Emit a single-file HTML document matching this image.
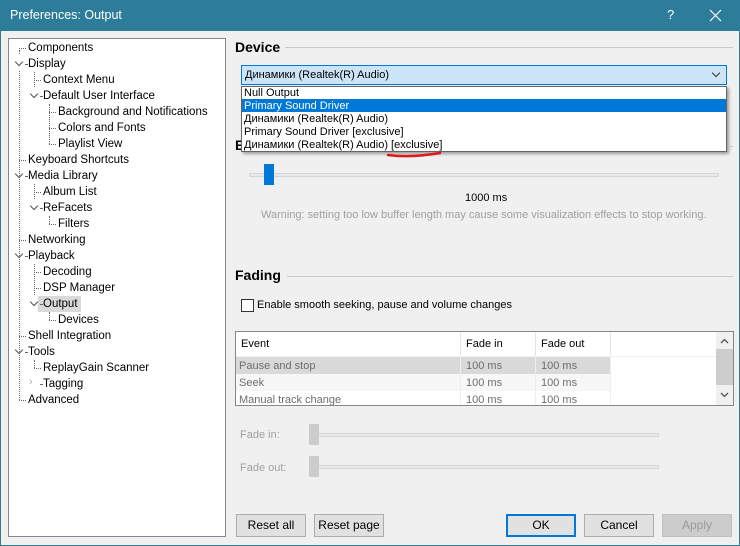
<!DOCTYPE html>
<html><head><meta charset="utf-8"><style>
*{box-sizing:border-box;margin:0;padding:0}
body{width:740px;height:546px;background:#f0f0f0;font-family:"Liberation Sans",sans-serif;font-size:11.5px;color:#000;position:relative;overflow:hidden}
.a{position:absolute;white-space:nowrap}
.t{position:absolute;white-space:nowrap;color:#000;line-height:16px;height:16px}
.hd{position:absolute;height:0;border-top:1px dotted #666}
.vd{position:absolute;width:0;border-left:1px dotted #666}
.ch{position:absolute;width:6px;height:6px;border-left:1.3px solid #555;border-bottom:1.3px solid #555;transform:rotate(-45deg)}
.btn{position:absolute;top:514px;height:23px;width:70px;border:1px solid #adadad;background:#e1e1e1;text-align:center;line-height:21px;font-size:12px}
.row{position:absolute;height:13px;line-height:14px;left:242px;width:484px;padding-left:2px;font-size:11px}
</style></head><body>
<div class="a" style="left:0;top:0;width:740px;height:31px;background:#2d7c99"></div>
<div class="a" style="left:10px;top:8px;color:#fff;font-size:12.5px">Preferences: Output</div>
<div class="a" style="left:667px;top:7px;color:#fff;font-size:13px">?</div>
<svg class="a" style="left:709px;top:9px" width="13" height="13"><path d="M1 1L12 12M12 1L1 12" stroke="#fff" stroke-width="1.2"/></svg>
<div class="a" style="left:0;top:31px;width:1px;height:515px;background:#2d7c99"></div>
<div class="a" style="right:0;top:31px;width:1px;height:515px;background:#2d7c99"></div>
<div class="a" style="left:0;bottom:0;width:740px;height:1px;background:#2d7c99"></div>

<!-- tree -->
<div class="a" style="left:8px;top:38px;width:218px;height:499px;background:#fff;border:1px solid #828790"></div>
<div class="vd" style="left:19px;top:50px;height:4px"></div>
<div class="vd" style="left:19px;top:71px;height:329px"></div>
<div class="vd" style="left:34px;top:72px;height:15px"></div>
<div class="vd" style="left:49px;top:104px;height:40px"></div>
<div class="vd" style="left:34px;top:184px;height:15px"></div>
<div class="vd" style="left:49px;top:216px;height:8px"></div>
<div class="vd" style="left:34px;top:264px;height:31px"></div>
<div class="vd" style="left:49px;top:312px;height:8px"></div>
<div class="vd" style="left:34px;top:360px;height:8px"></div>
<div class="a" style="left:38px;top:296px;width:43px;height:16px;background:#d9d9d9"></div>
<div id="tree"></div>
<script>
var it=[[0,"Components"],[0,"Display",1],[1,"Context Menu"],[1,"Default User Interface",1],[2,"Background and Notifications"],[2,"Colors and Fonts"],[2,"Playlist View"],[0,"Keyboard Shortcuts"],[0,"Media Library",1],[1,"Album List"],[1,"ReFacets",1],[2,"Filters"],[0,"Networking"],[0,"Playback",1],[1,"Decoding"],[1,"DSP Manager"],[1,"Output",1],[2,"Devices"],[0,"Shell Integration"],[0,"Tools",1],[1,"ReplayGain Scanner"],[1,"Tagging",2],[0,"Advanced"]];
var h="";
it.forEach(function(e,i){var y=40+i*16,x=28+e[0]*15;
if(e[2]==1){h+='<div class="ch" style="left:'+(x-12)+'px;top:'+(y+3)+'px"></div>';h+='<div class="hd" style="left:'+(x-3)+'px;top:'+(y+8)+'px;width:2px"></div>';}
else if(e[2]==2){h+='<div class="a" style="left:'+(x-14)+'px;top:'+(y)+'px;color:#aaa;font-size:11px">›</div>';h+='<div class="hd" style="left:'+(x-3)+'px;top:'+(y+8)+'px;width:2px"></div>';}
else h+='<div class="hd" style="left:'+(x-9)+'px;top:'+(y+8)+'px;width:7px"></div>';
h+='<div class="t" style="left:'+x+'px;top:'+y+'px">'+e[1]+'</div>';});
document.getElementById("tree").innerHTML=h;
</script>

<!-- Device -->
<div class="a" style="left:235px;top:39px;font-size:14px;font-weight:bold">Device</div>
<div class="a" style="left:285px;top:47px;width:448px;height:1px;background:#c8c8c8"></div>
<div class="a" style="left:241px;top:65px;width:486px;height:20px;background:#cce4f7;border:1px solid #0078d7"></div>
<div class="a" style="left:245px;top:69px;font-size:11px">Динамики (Realtek(R) Audio)</div>
<div class="ch" style="left:713px;top:70px;border-color:#333;width:6px;height:6px"></div>
<div class="a" style="left:235px;top:137px;font-size:14px;font-weight:bold">B</div>
<div class="a" style="left:730px;top:146px;width:3px;height:1px;background:#c8c8c8"></div>
<div class="a" style="left:241px;top:86px;width:486px;height:66px;background:#fff;border:1px solid #646464;box-shadow:2px 2px 3px rgba(0,0,0,.35)"></div>
<div class="row" style="top:86px">Null Output</div>
<div class="row" style="top:99px;background:#0078d7;color:#fff">Primary Sound Driver</div>
<div class="row" style="top:112px">Динамики (Realtek(R) Audio)</div>
<div class="row" style="top:125px">Primary Sound Driver [exclusive]</div>
<div class="row" style="top:138px">Динамики (Realtek(R) Audio) [exclusive]</div>
<svg class="a" style="left:380px;top:148px" width="70" height="14"><path d="M8 7 Q30 10 60 5" stroke="#e01818" stroke-width="2.5" fill="none" stroke-linecap="round"/></svg>

<div class="a" style="left:249px;top:173px;width:470px;height:4px;background:#e7eaea;border:1px solid #d6d6d6"></div>
<div class="a" style="left:264px;top:164px;width:10px;height:21px;background:#0078d7"></div>
<div class="a" style="left:465px;top:192px;font-size:11px">1000 ms</div>
<div class="a" style="left:261px;top:209px;font-size:11px;color:#a0a0a0">Warning: setting too low buffer length may cause some visualization effects to stop working.</div>

<!-- Fading -->
<div class="a" style="left:235px;top:267px;font-size:14px;font-weight:bold">Fading</div>
<div class="a" style="left:287px;top:276px;width:446px;height:1px;background:#c8c8c8"></div>
<div class="a" style="left:241px;top:299px;width:13px;height:13px;border:1px solid #333;background:#fff"></div>
<div class="a" style="left:257px;top:299px;font-size:11px">Enable smooth seeking, pause and volume changes</div>

<div class="a" style="left:235px;top:331px;width:499px;height:75px;background:#fff;border:1px solid #828790"></div>
<div class="a" style="left:460px;top:332px;width:1px;height:24px;background:#e5e5e5"></div>
<div class="a" style="left:535px;top:332px;width:1px;height:24px;background:#e5e5e5"></div>
<div class="a" style="left:610px;top:332px;width:1px;height:24px;background:#e5e5e5"></div>
<div class="a" style="left:236px;top:356px;width:480px;height:1px;background:#f0f0f0"></div>
<div class="a" style="left:241px;top:338px;font-size:11px">Event</div>
<div class="a" style="left:466px;top:338px;font-size:11px">Fade in</div>
<div class="a" style="left:541px;top:338px;font-size:11px">Fade out</div>
<div class="a" style="left:236px;top:357px;width:374px;height:17px;background:#d9d9d9"></div>
<div class="a" style="left:236px;top:374px;width:374px;height:17px;background:#f7f7f7"></div>
<div class="a" style="left:460px;top:357px;width:1px;height:48px;background:#eee"></div>
<div class="a" style="left:535px;top:357px;width:1px;height:48px;background:#eee"></div>
<div class="a" style="left:610px;top:357px;width:1px;height:48px;background:#eee"></div>
<div class="a" style="left:239px;top:360px;color:#6d6d6d;font-size:11px">Pause and stop</div>
<div class="a" style="left:466px;top:360px;color:#6d6d6d;font-size:11px">100 ms</div>
<div class="a" style="left:541px;top:360px;color:#6d6d6d;font-size:11px">100 ms</div>
<div class="a" style="left:239px;top:377px;color:#6d6d6d;font-size:11px">Seek</div>
<div class="a" style="left:466px;top:377px;color:#6d6d6d;font-size:11px">100 ms</div>
<div class="a" style="left:541px;top:377px;color:#6d6d6d;font-size:11px">100 ms</div>
<div class="a" style="left:236px;top:391px;width:374px;height:14px;overflow:hidden"><div class="a" style="left:3px;top:3px;color:#6d6d6d;font-size:11px">Manual track change</div><div class="a" style="left:230px;top:3px;color:#6d6d6d;font-size:11px">100 ms</div><div class="a" style="left:305px;top:3px;color:#6d6d6d;font-size:11px">100 ms</div></div>
<div class="a" style="left:716px;top:332px;width:17px;height:73px;background:#f0f0f0"></div>
<div class="a" style="left:716px;top:349px;width:17px;height:36px;background:#cdcdcd"></div>
<svg class="a" style="left:720px;top:338px" width="9" height="6"><path d="M1 5L4.5 1.5L8 5" stroke="#555" stroke-width="1.3" fill="none"/></svg>
<svg class="a" style="left:720px;top:392px" width="9" height="6"><path d="M1 1L4.5 4.5L8 1" stroke="#555" stroke-width="1.3" fill="none"/></svg>

<div class="a" style="left:240px;top:429px;color:#a0a0a0;font-size:11px">Fade in:</div>
<div class="a" style="left:318px;top:433px;width:341px;height:4px;background:#e7eaea;border:1px solid #d6d6d6"></div>
<div class="a" style="left:309px;top:424px;width:10px;height:21px;background:#ccc"></div>
<div class="a" style="left:240px;top:462px;color:#a0a0a0;font-size:11px">Fade out:</div>
<div class="a" style="left:318px;top:465px;width:341px;height:4px;background:#e7eaea;border:1px solid #d6d6d6"></div>
<div class="a" style="left:309px;top:456px;width:10px;height:21px;background:#ccc"></div>

<div class="btn" style="left:236px">Reset all</div>
<div class="btn" style="left:314px">Reset page</div>
<div class="btn" style="left:506px;border:2px solid #0078d7;line-height:19px">OK</div>
<div class="btn" style="left:584px">Cancel</div>
<div class="btn" style="left:662px;border-color:#bfbfbf;background:#ccc;color:#9a9a9a">Apply</div>
</body></html>
